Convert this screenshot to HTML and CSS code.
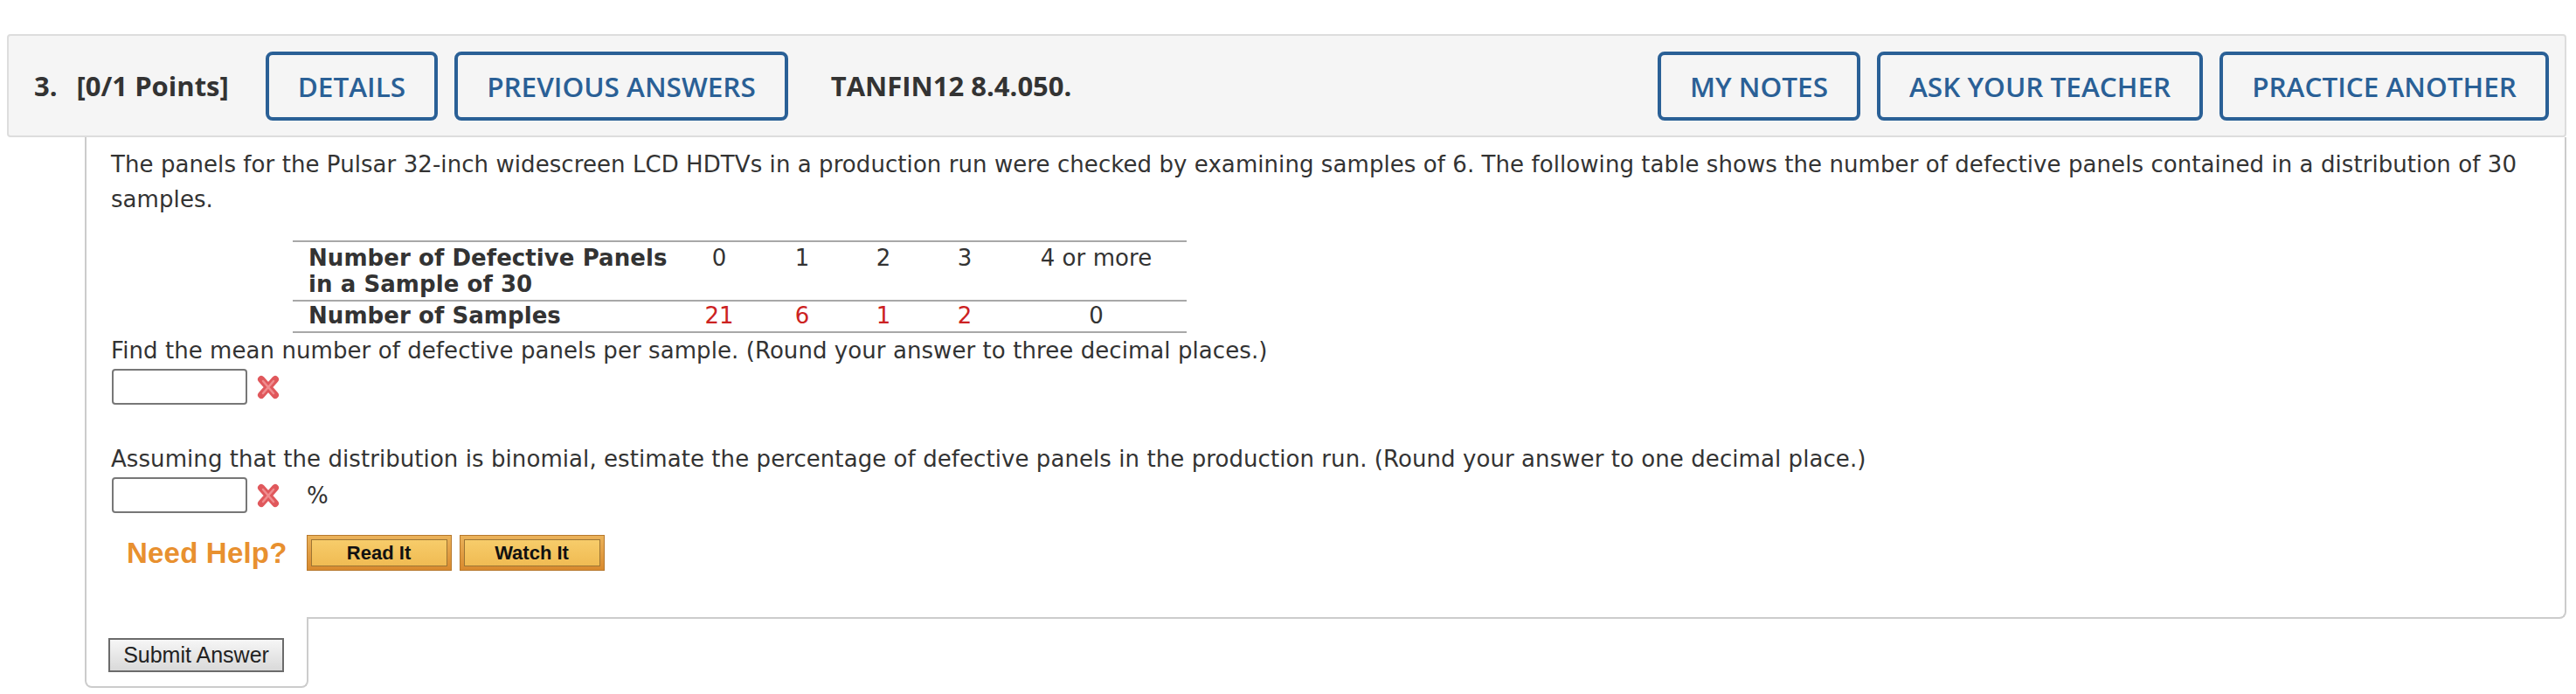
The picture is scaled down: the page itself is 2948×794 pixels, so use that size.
FILE: index.html
```html
<!DOCTYPE html>
<html>
<head>
<meta charset="utf-8">
<link rel="stylesheet" href="styles.css">
</head>
<body>
<div class="question">
  <div class="qhead">
    <span class="qnum">3.</span>
    <span class="qpts">[0/1 Points]</span>
    <button class="hbtn first">DETAILS</button>
    <button class="hbtn">PREVIOUS ANSWERS</button>
    <span class="qcode">TANFIN12 8.4.050.</span>
    <span class="spacer"></span>
    <button class="hbtn">MY NOTES</button>
    <button class="hbtn">ASK YOUR TEACHER</button>
    <button class="hbtn">PRACTICE ANOTHER</button>
  </div>
  <div class="qbody">
    <p class="intro">The panels for the Pulsar 32-inch widescreen LCD HDTVs in a production run were checked by examining samples of 6. The following table shows the number of defective panels contained in a distribution of 30 samples.</p>
    <table class="dtable">
      <tr class="r1">
        <th class="c0">Number of Defective Panels<br>in a Sample of 30</th>
        <td class="c1">0</td>
        <td class="c2">1</td>
        <td class="c3">2</td>
        <td class="c4">3</td>
        <td class="c5">4 or more</td>
      </tr>
      <tr class="r2">
        <th class="c0">Number of Samples</th>
        <td class="red">21</td>
        <td class="red">6</td>
        <td class="red">1</td>
        <td class="red">2</td>
        <td>0</td>
      </tr>
    </table>
    <div class="line">Find the mean number of defective panels per sample. (Round your answer to three decimal places.)</div>
    <div class="answer">
      <span class="inbox"></span>
      <svg class="xicon" width="28" height="28" viewBox="0 0 28 28"><path d="M6 5 L22 23 M22 5 L6 23" stroke="#e0585c" stroke-width="8" stroke-linecap="round" fill="none"/><path d="M8 7 L20 21 M20 7 L8 21" stroke="#f08d8f" stroke-width="2.5" stroke-linecap="round" fill="none"/></svg>
    </div>
    <div class="line gap">Assuming that the distribution is binomial, estimate the percentage of defective panels in the production run. (Round your answer to one decimal place.)</div>
    <div class="answer">
      <span class="inbox"></span>
      <svg class="xicon" width="28" height="28" viewBox="0 0 28 28"><path d="M6 5 L22 23 M22 5 L6 23" stroke="#e0585c" stroke-width="8" stroke-linecap="round" fill="none"/><path d="M8 7 L20 21 M20 7 L8 21" stroke="#f08d8f" stroke-width="2.5" stroke-linecap="round" fill="none"/></svg>
      <span class="unit">%</span>
    </div>
    <div class="help">
      <span class="needhelp">Need Help?</span>
      <span class="gbtn"><span class="gin">Read It</span></span>
      <span class="gbtn"><span class="gin">Watch It</span></span>
    </div>
  </div>
  <div class="submit-tab">
    <button class="submit">Submit Answer</button>
  </div>
</div>
</body>
</html>
```
FILE: styles.css
```css
html, body {
  background: #ffffff;
}
body {
  margin: 8px;
  padding-top: 31px;
  font-family: "DejaVu Sans", Verdana, sans-serif;
  color: #333333;
}
.question {
  width: 2929px;
}
.qhead {
  display: flex;
  align-items: center;
  box-sizing: border-box;
  height: 118px;
  background: #f5f5f5;
  border: 2px solid #dddddd;
  border-radius: 4px;
  padding: 0 18px 0 29px;
  font-family: "Open Sans", sans-serif;
}
.qnum, .qpts, .qcode {
  font-weight: 700;
  font-size: 31px;
  color: #333333;
}
.qpts {
  margin-left: 22px;
}
.qcode {
  margin-left: 49px;
}
.spacer {
  flex: 1;
}
.hbtn {
  font-family: "Open Sans", sans-serif;
  font-weight: 600;
  font-size: 31.5px;
  color: #2a6096;
  background: #f5f5f5;
  border: 4px solid #2a6096;
  border-radius: 8px;
  height: 79px;
  padding: 0 33px;
  margin-left: 19px;
  cursor: pointer;
}
.hbtn.first {
  margin-left: 42px;
}
.qbody {
  margin-left: 89px;
  border-left: 2px solid #cccccc;
  border-right: 2px solid #cccccc;
  border-bottom: 2px solid #cccccc;
  border-bottom-right-radius: 8px;
  padding: 11px 28px 53px 28px;
  font-size: 26px;
  line-height: 40px;
  letter-spacing: 0.07px;
}
.intro {
  margin: 0 0 27px 0;
}
.dtable {
  margin-left: 208px;
  border-collapse: collapse;
  line-height: 30px;
}
.dtable th, .dtable td {
  padding: 0;
  vertical-align: top;
}
.dtable th {
  text-align: left;
  font-weight: 700;
  padding-left: 18px;
  width: 422px;
}
.dtable td {
  text-align: center;
}
.dtable tr.r1 th, .dtable tr.r1 td {
  border-top: 2px solid #a8a8a8;
  border-bottom: 2px solid #a8a8a8;
  padding-top: 3px;
  padding-bottom: 3px;
}
.dtable tr.r2 th, .dtable tr.r2 td {
  border-bottom: 2px solid #a8a8a8;
  padding-top: 1px;
  padding-bottom: 3px;
}
.c1 { width: 96px; }
.c2 { width: 94px; }
.c3 { width: 92px; }
.c4 { width: 94px; }
.c5 { width: 207px; }
.red {
  color: #cc2222;
}
.line.gap {
  margin-top: 42px;
}
.answer {
  display: flex;
  align-items: center;
  height: 41px;
  margin-top: 1px;
  padding-left: 1px;
}
.inbox {
  display: inline-block;
  box-sizing: border-box;
  width: 155px;
  height: 41px;
  border: 2px solid #777777;
  border-radius: 4px;
  background: #ffffff;
}
.xicon {
  margin-left: 10px;
}
.unit {
  margin-left: 30px;
}
.help {
  display: flex;
  align-items: center;
  margin-top: 25px;
  height: 41px;
  padding-left: 18px;
}
.needhelp {
  font-family: "Liberation Sans", Arial, sans-serif;
  font-weight: 700;
  font-size: 33px;
  letter-spacing: 0.2px;
  color: #e8902f;
  margin-right: 22px;
  line-height: 41px;
}
.gbtn {
  display: inline-flex;
  box-sizing: border-box;
  width: 166px;
  height: 41px;
  padding: 4px;
  margin-right: 9px;
  background: linear-gradient(#eab25a, #d98a2e);
  border: 1px solid #b7782c;
}
.gin {
  flex: 1;
  display: flex;
  align-items: center;
  justify-content: center;
  background: linear-gradient(#f7cc6a, #f0bb53);
  border: 1px solid #9d7534;
  font-family: "Liberation Sans", Arial, sans-serif;
  font-weight: 700;
  font-size: 22px;
  letter-spacing: 0;
  color: #111111;
}
.submit-tab {
  box-sizing: border-box;
  width: 256px;
  margin-left: 89px;
  margin-top: -2px;
  background: #ffffff;
  border-left: 2px solid #cccccc;
  border-right: 2px solid #cccccc;
  border-bottom: 2px solid #cccccc;
  border-bottom-left-radius: 8px;
  border-bottom-right-radius: 8px;
  padding: 24px 0 16px 25px;
}
.submit {
  display: block;
  box-sizing: border-box;
  width: 201px;
  height: 39px;
  padding: 0;
  border: 2px solid #6b6b6b;
  background: linear-gradient(#f6f6f6, #d9d9d9);
  font-family: "Liberation Sans", Arial, sans-serif;
  font-size: 25px;
  color: #222222;
}
```
